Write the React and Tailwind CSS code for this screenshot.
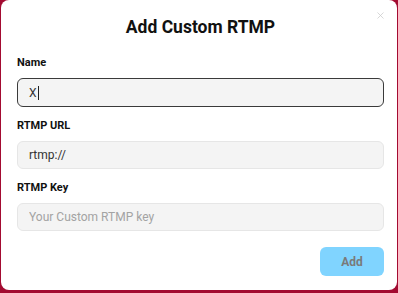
import { X } from 'lucide-react';

const Field = ({ label, children, className = '' }) => (
  <div className={className}>
    <div className="text-[11px] leading-4 font-bold text-[#111] mb-[7px]">{label}</div>
    {children}
  </div>
);

const App = () => {
  return (
    <div className="w-[398px] h-[293px] bg-[#a30b31] overflow-hidden font-['Roboto',sans-serif]">
      <div className="relative ml-[1px] w-[396px] h-[290px] bg-white rounded-[8px] pl-4 pr-[13px] pt-[13px]">
        <button className="absolute right-[11px] top-[10px] text-[#c9c9c9]">
          <X size={11} strokeWidth={1.6} />
        </button>

        <h2 className="text-center text-[17.5px] leading-7 font-bold text-[#111]">Add Custom RTMP</h2>

        <Field label="Name" className="mt-[14px]">
          <div className="h-[29px] flex items-center rounded-[6px] border border-[#3a3a3a] bg-[#f4f4f4] px-[11px] text-[12px] text-[#333]">
            X<span className="w-px h-[14px] bg-[#222] ml-[1px]" />
          </div>
        </Field>

        <Field label="RTMP URL" className="mt-[11px]">
          <input
            readOnly
            value="rtmp://"
            className="w-full h-[28px] rounded-[6px] border border-[#e6e6e6] bg-[#f4f4f4] px-[11px] text-[12px] text-[#333] outline-none"
          />
        </Field>

        <Field label="RTMP Key" className="mt-[11px]">
          <input
            readOnly
            placeholder="Your Custom RTMP key"
            className="w-full h-[28px] rounded-[6px] border border-[#e6e6e6] bg-[#f4f4f4] px-[11px] text-[12px] text-[#333] placeholder:text-[#a3a3a3] outline-none"
          />
        </Field>

        <div className="flex justify-end mt-4">
          <button className="w-[64px] h-[29px] rounded-[6px] bg-[#80d4ff] text-[12px] font-bold text-[#7a7a7a]">
            Add
          </button>
        </div>
      </div>
    </div>
  );
};

export default App;
